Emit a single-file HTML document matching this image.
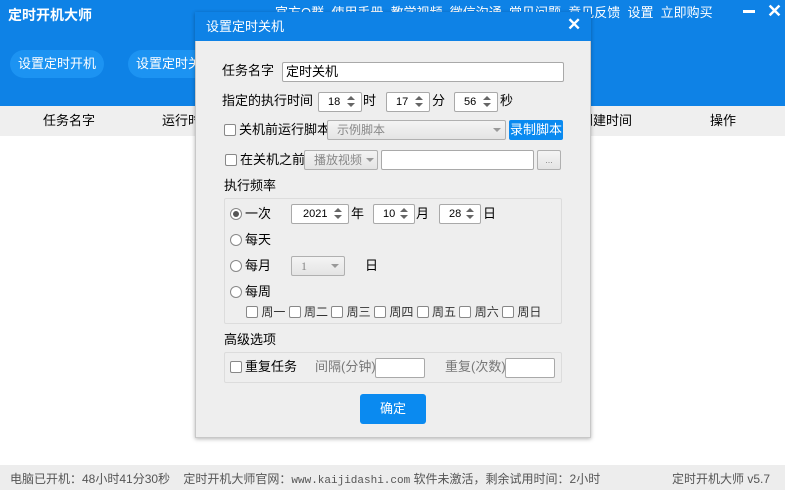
<!DOCTYPE html>
<html><head><meta charset="utf-8"><style>
*{margin:0;padding:0;box-sizing:border-box}
body{width:785px;height:490px;position:relative;overflow:hidden;background:#fff;font-family:"Liberation Sans","Noto Sans CJK SC",sans-serif;font-size:12px;color:#000}
.a{position:absolute;white-space:nowrap;line-height:16px}
.hdr{left:0;top:0;width:785px;height:106px;background:#0e82e6}
.pill{height:28px;border-radius:14px;background:#1c93f2;color:#fff;font-size:13px;line-height:28px;text-align:center}
.th{left:0;top:106px;width:785px;height:30px;background:#efefef}
.dlg{left:195px;top:12px;width:396px;height:426px;background:#eeeeee;border:1px solid #c8c8c8;box-shadow:0 1px 4px rgba(0,0,0,.3)}
.tb{left:195px;top:12px;width:396px;height:29px;background:#0e82e6;color:#fff;font-size:13px;line-height:29px;padding-left:11px}
.in{background:#fff;border:1px solid #a9a9a9;border-radius:2px}
.sp{background:#fff;border:1px solid #a9a9a9;border-radius:2px;font-size:11px;line-height:18px;padding-left:9px}
.sp:after{content:"";position:absolute;right:6px;top:3px;border:4px solid transparent;border-bottom:4px solid #666;border-top:0}
.sp:before{content:"";position:absolute;right:6px;top:10px;border:4px solid transparent;border-top:4px solid #666;border-bottom:0}
.cb{width:12px;height:12px;background:#fff;border:1px solid #888;border-radius:2px}
.rd{width:12px;height:12px;background:#fff;border:1px solid #888;border-radius:50%}
.sel{background:linear-gradient(#f4f4f4,#e4e4e4);border:1px solid #b0b0b0;border-radius:2px;color:#888;font-size:12px;line-height:18px;padding-left:9px}
.grp{border:1px solid #dcdcdc;border-radius:2px}
.dd{position:absolute;border:4px solid transparent;border-top:4px solid #999}
</style></head><body>
<div class="a hdr"></div>
<div class="a" style="left:8px;top:7px;color:#fff;font-size:14px;font-weight:bold">定时开机大师</div>
<div class="a" style="left:275px;top:5px;color:#fff;font-size:13px">官方Q群 &nbsp;使用手册 &nbsp;教学视频 &nbsp;微信沟通 &nbsp;常见问题 &nbsp;意见反馈 &nbsp;设置 &nbsp;立即购买</div>
<div class="a" style="left:743px;top:10px;width:12px;height:3px;background:#fff"></div>
<div class="a" style="left:767px;top:3px;color:#fff;font-size:18px;font-weight:bold">✕</div>
<div class="a pill" style="left:10px;top:50px;width:94px">设置定时开机</div>
<div class="a pill" style="left:128px;top:50px;width:94px">设置定时关机</div>
<div class="a th"></div>
<div class="a" style="left:43px;top:113px;font-size:13px">任务名字</div>
<div class="a" style="left:162px;top:113px;font-size:13px">运行时间</div>
<div class="a" style="left:580px;top:113px;font-size:13px">创建时间</div>
<div class="a" style="left:710px;top:113px;font-size:13px">操作</div>
<div class="a" style="left:0;top:465px;width:785px;height:25px;background:#ededed"></div>
<div class="a" style="left:10px;top:471px;font-size:12px;color:#555">电脑已开机：48小时41分30秒 &nbsp;&nbsp;&nbsp;定时开机大师官网：<span style="font-family:'Liberation Mono';font-size:11px">www.kaijidashi.com</span> 软件未激活，剩余试用时间：2小时</div>
<div class="a" style="left:672px;top:471px;font-size:12px;color:#555">定时开机大师 v5.7</div>

<div class="a dlg"></div>
<div class="a tb">设置定时关机</div>
<div class="a" style="left:567px;top:17px;color:#fff;font-size:17px;font-weight:bold">✕</div>

<div class="a" style="left:222px;top:63px;font-size:13px">任务名字</div>
<div class="a in" style="left:282px;top:62px;width:282px;height:20px;font-size:13px;line-height:18px;padding-left:3px">定时关机</div>

<div class="a" style="left:222px;top:93px;font-size:13px">指定的执行时间</div>
<div class="a sp" style="left:318px;top:92px;width:44px;height:20px">18</div><div class="a" style="left:363px;top:93px;font-size:13px">时</div>
<div class="a sp" style="left:386px;top:92px;width:44px;height:20px">17</div><div class="a" style="left:432px;top:93px;font-size:13px">分</div>
<div class="a sp" style="left:454px;top:92px;width:44px;height:20px">56</div><div class="a" style="left:500px;top:93px;font-size:13px">秒</div>

<div class="a cb" style="left:224px;top:124px"></div>
<div class="a" style="left:239px;top:122px;font-size:13px">关机前运行脚本</div>
<div class="a sel" style="left:327px;top:120px;width:179px;height:20px">示例脚本</div>
<div class="dd" style="left:493px;top:128px"></div>
<div class="a" style="left:509px;top:120px;width:54px;height:20px;background:#0a8af0;border-radius:2px;color:#fff;font-size:13px;line-height:20px;text-align:center">录制脚本</div>

<div class="a cb" style="left:225px;top:154px"></div>
<div class="a" style="left:240px;top:152px;font-size:13px">在关机之前</div>
<div class="a sel" style="left:304px;top:150px;width:74px;height:20px">播放视频</div>
<div class="dd" style="left:366px;top:158px"></div>
<div class="a in" style="left:381px;top:150px;width:153px;height:20px"></div>
<div class="a sel" style="left:537px;top:150px;width:24px;height:20px;padding:0;text-align:center;font-size:9px;line-height:18px">...</div>

<div class="a" style="left:224px;top:178px;font-size:13px">执行频率</div>
<div class="a grp" style="left:224px;top:198px;width:338px;height:126px"></div>
<div class="a rd" style="left:230px;top:208px"></div><div class="a" style="left:233px;top:211px;width:6px;height:6px;border-radius:50%;background:#555"></div>
<div class="a" style="left:245px;top:206px;font-size:13px">一次</div>
<div class="a sp" style="left:291px;top:204px;width:58px;height:20px;padding-left:11px">2021</div><div class="a" style="left:351px;top:206px;font-size:13px">年</div>
<div class="a sp" style="left:373px;top:204px;width:42px;height:20px">10</div><div class="a" style="left:416px;top:206px;font-size:13px">月</div>
<div class="a sp" style="left:439px;top:204px;width:42px;height:20px">28</div><div class="a" style="left:483px;top:206px;font-size:13px">日</div>
<div class="a rd" style="left:230px;top:234px"></div><div class="a" style="left:245px;top:232px;font-size:13px">每天</div>
<div class="a rd" style="left:230px;top:260px"></div><div class="a" style="left:245px;top:258px;font-size:13px">每月</div>
<div class="a sel" style="left:291px;top:256px;width:54px;height:20px;font-family:'Liberation Serif'">1</div>
<div class="dd" style="left:331px;top:264px"></div>
<div class="a" style="left:365px;top:258px;font-size:13px">日</div>
<div class="a rd" style="left:230px;top:286px"></div><div class="a" style="left:245px;top:284px;font-size:13px">每周</div>
<div class="a" style="left:246px;top:304px;font-size:12px;color:#333">
<span class="cb" style="display:inline-block;vertical-align:-2px"></span> 周一 <span class="cb" style="display:inline-block;vertical-align:-2px"></span> 周二 <span class="cb" style="display:inline-block;vertical-align:-2px"></span> 周三 <span class="cb" style="display:inline-block;vertical-align:-2px"></span> 周四 <span class="cb" style="display:inline-block;vertical-align:-2px"></span> 周五 <span class="cb" style="display:inline-block;vertical-align:-2px"></span> 周六 <span class="cb" style="display:inline-block;vertical-align:-2px"></span> 周日</div>

<div class="a" style="left:224px;top:332px;font-size:13px">高级选项</div>
<div class="a grp" style="left:224px;top:352px;width:338px;height:31px"></div>
<div class="a cb" style="left:230px;top:361px"></div>
<div class="a" style="left:245px;top:359px;font-size:13px">重复任务</div>
<div class="a" style="left:315px;top:359px;font-size:13px;color:#777">间隔(分钟)</div>
<div class="a in" style="left:375px;top:358px;width:50px;height:20px"></div>
<div class="a" style="left:445px;top:359px;font-size:13px;color:#777">重复(次数)</div>
<div class="a in" style="left:505px;top:358px;width:50px;height:20px"></div>

<div class="a" style="left:360px;top:394px;width:66px;height:30px;background:#0a8af0;border-radius:3px;color:#fff;font-size:13px;line-height:30px;text-align:center">确定</div>
</body></html>
